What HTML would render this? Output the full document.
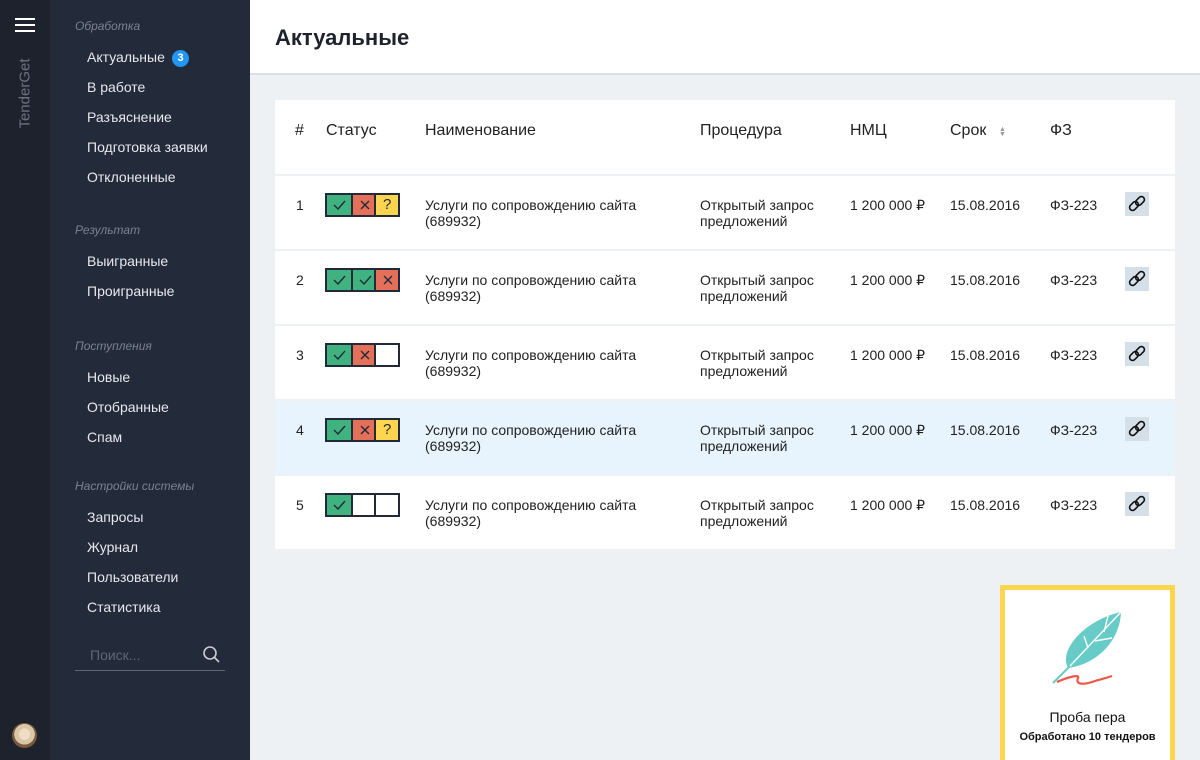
<!DOCTYPE html>
<html><head><meta charset="utf-8"><style>
*{margin:0;padding:0;box-sizing:border-box}
html,body{width:1200px;height:760px;overflow:hidden}
body{position:relative;font-family:"Liberation Sans",sans-serif;background:#edf1f4}
.a{position:absolute}
.strip{left:0;top:0;width:50px;height:760px;background:#1d222d}
.side{left:50px;top:0;width:200px;height:760px;background:#232b3b}
.grp{left:75px;font-size:12px;font-style:italic;color:#7b8190}
.it{left:87px;font-size:14px;color:#e6e8ec}
.hdr{left:250px;top:0;width:950px;height:75px;background:#fff;border-bottom:2px solid #d8dfe7}
.card{left:275px;top:100px;width:900px;height:449px;background:#fff}
.th{font-size:16px;color:#222;top:122px}
.row{left:275px;width:900px;height:75px;border-top:2px solid #edf1f4}
.c{font-size:14px;color:#222;line-height:16px}
.st{width:75px;height:24px;border:2px solid #222a3a;display:flex;background:#fff}
.st div{width:24px;height:20px;position:relative}
.st div+div{border-left:2px solid #222a3a}
.st svg{position:absolute;left:5px;top:3px}
.g{background:#3fb27f}.r{background:#e4705a}.y{background:#fdd54f}
.q{font-size:15px;text-align:center;line-height:20px;color:#222a3a}
</style></head><body>
<div class="a strip"></div>
<div class="a side"></div>
<div class="a" style="left:15px;top:18px;width:20px;height:2px;background:#fff;box-shadow:0 6px 0 #fff,0 12px 0 #fff"></div>
<div class="a" style="left:-15px;top:85px;transform:rotate(-90deg);font-size:15px;color:#6c7280;width:80px;text-align:center">TenderGet</div>
<div class="a" style="left:12px;top:723px;width:25px;height:25px;border-radius:50%;background:radial-gradient(circle at 50% 45%,#f2dcc5 0 30%,#d9c7a8 31% 55%,#7a5a3e 56%)"></div>

<div class="a grp" style="top:19px">Обработка</div>
<div class="a it" style="top:49px">Актуальные</div>
<div class="a" style="left:172px;top:50px;width:17px;height:17px;border-radius:50%;background:#2196f3;color:#fff;font-size:11px;font-weight:bold;text-align:center;line-height:17px">3</div>
<div class="a it" style="top:79px">В работе</div>
<div class="a it" style="top:109px">Разъяснение</div>
<div class="a it" style="top:139px">Подготовка заявки</div>
<div class="a it" style="top:169px">Отклоненные</div>
<div class="a grp" style="top:223px">Результат</div>
<div class="a it" style="top:253px">Выигранные</div>
<div class="a it" style="top:283px">Проигранные</div>
<div class="a grp" style="top:339px">Поступления</div>
<div class="a it" style="top:369px">Новые</div>
<div class="a it" style="top:399px">Отобранные</div>
<div class="a it" style="top:429px">Спам</div>
<div class="a grp" style="top:479px">Настройки системы</div>
<div class="a it" style="top:509px">Запросы</div>
<div class="a it" style="top:539px">Журнал</div>
<div class="a it" style="top:569px">Пользователи</div>
<div class="a it" style="top:599px">Статистика</div>
<div class="a" style="left:90px;top:647px;font-size:14px;color:#5f6675">Поиск...</div>
<svg class="a" style="left:202px;top:645px" width="18" height="18"><circle cx="8" cy="8" r="6" fill="none" stroke="#c8ccd3" stroke-width="1.6"/><line x1="12.5" y1="12.5" x2="17" y2="17" stroke="#c8ccd3" stroke-width="1.6"/></svg>
<div class="a" style="left:75px;top:670px;width:150px;height:1px;background:#5f6675"></div>

<div class="a hdr"></div>
<div class="a" style="left:275px;top:25px;font-size:22px;font-weight:bold;color:#1d222d">Актуальные</div>
<div class="a card"></div>
<div class="a th" style="left:295px">#</div>
<div class="a th" style="left:326px">Статус</div>
<div class="a th" style="left:425px">Наименование</div>
<div class="a th" style="left:700px">Процедура</div>
<div class="a th" style="left:850px">НМЦ</div>
<div class="a th" style="left:950px">Срок</div>
<div class="a" style="left:999px;top:127px;font-size:7px;color:#999;line-height:5px">▲<br>▼</div>
<div class="a th" style="left:1050px">ФЗ</div>

<div class="a row" style="top:174px"></div>
<div class="a row" style="top:249px"></div>
<div class="a row" style="top:324px"></div>
<div class="a row" style="top:399px;background:#e8f4fd;height:76px"></div>
<div class="a row" style="top:474px"></div>

<svg width="0" height="0" style="position:absolute"><defs>
<path id="ck" d="M2 7 L6 11 L13 3" fill="none" stroke="#222a3a" stroke-width="1.4"/>
<path id="xx" d="M3 3 L11 11 M11 3 L3 11" fill="none" stroke="#222a3a" stroke-width="1.4"/>
<g id="lk"><rect width="24" height="24" fill="#d5dfe8"/><g fill="none" stroke="#111" stroke-width="1.6"><rect x="4" y="11" width="10" height="6" rx="3" transform="rotate(-45 9 14)"/><rect x="10" y="6" width="10" height="6" rx="3" transform="rotate(-45 15 9)"/></g></g>
</defs></svg>

<div class="a c" style="left:296px;top:197px">1</div>
<div class="a st" style="left:325px;top:193px"><div class="g"><svg width="15" height="14"><use href="#ck"/></svg></div><div class="r"><svg width="15" height="14"><use href="#xx"/></svg></div><div class="y q">?</div></div>
<div class="a c" style="left:296px;top:272px">2</div>
<div class="a st" style="left:325px;top:268px"><div class="g"><svg width="15" height="14"><use href="#ck"/></svg></div><div class="g"><svg width="15" height="14"><use href="#ck"/></svg></div><div class="r"><svg width="15" height="14"><use href="#xx"/></svg></div></div>
<div class="a c" style="left:296px;top:347px">3</div>
<div class="a st" style="left:325px;top:343px"><div class="g"><svg width="15" height="14"><use href="#ck"/></svg></div><div class="r"><svg width="15" height="14"><use href="#xx"/></svg></div><div></div></div>
<div class="a c" style="left:296px;top:422px">4</div>
<div class="a st" style="left:325px;top:418px"><div class="g"><svg width="15" height="14"><use href="#ck"/></svg></div><div class="r"><svg width="15" height="14"><use href="#xx"/></svg></div><div class="y q">?</div></div>
<div class="a c" style="left:296px;top:497px">5</div>
<div class="a st" style="left:325px;top:493px"><div class="g"><svg width="15" height="14"><use href="#ck"/></svg></div><div></div><div></div></div>

<div class="a c" style="left:425px;top:197px">Услуги по сопровождению сайта<br>(689932)</div>
<div class="a c" style="left:425px;top:272px">Услуги по сопровождению сайта<br>(689932)</div>
<div class="a c" style="left:425px;top:347px">Услуги по сопровождению сайта<br>(689932)</div>
<div class="a c" style="left:425px;top:422px">Услуги по сопровождению сайта<br>(689932)</div>
<div class="a c" style="left:425px;top:497px">Услуги по сопровождению сайта<br>(689932)</div>
<div class="a c" style="left:700px;top:197px">Открытый запрос<br>предложений</div>
<div class="a c" style="left:700px;top:272px">Открытый запрос<br>предложений</div>
<div class="a c" style="left:700px;top:347px">Открытый запрос<br>предложений</div>
<div class="a c" style="left:700px;top:422px">Открытый запрос<br>предложений</div>
<div class="a c" style="left:700px;top:497px">Открытый запрос<br>предложений</div>
<div class="a c" style="left:850px;top:197px">1 200 000 ₽</div>
<div class="a c" style="left:850px;top:272px">1 200 000 ₽</div>
<div class="a c" style="left:850px;top:347px">1 200 000 ₽</div>
<div class="a c" style="left:850px;top:422px">1 200 000 ₽</div>
<div class="a c" style="left:850px;top:497px">1 200 000 ₽</div>
<div class="a c" style="left:950px;top:197px">15.08.2016</div>
<div class="a c" style="left:950px;top:272px">15.08.2016</div>
<div class="a c" style="left:950px;top:347px">15.08.2016</div>
<div class="a c" style="left:950px;top:422px">15.08.2016</div>
<div class="a c" style="left:950px;top:497px">15.08.2016</div>
<div class="a c" style="left:1050px;top:197px">ФЗ-223</div>
<div class="a c" style="left:1050px;top:272px">ФЗ-223</div>
<div class="a c" style="left:1050px;top:347px">ФЗ-223</div>
<div class="a c" style="left:1050px;top:422px">ФЗ-223</div>
<div class="a c" style="left:1050px;top:497px">ФЗ-223</div>

<svg class="a" style="left:1125px;top:192px" width="24" height="24"><use href="#lk"/></svg>
<svg class="a" style="left:1125px;top:267px" width="24" height="24"><use href="#lk"/></svg>
<svg class="a" style="left:1125px;top:342px" width="24" height="24"><use href="#lk"/></svg>
<svg class="a" style="left:1125px;top:417px" width="24" height="24"><use href="#lk"/></svg>
<svg class="a" style="left:1125px;top:492px" width="24" height="24"><use href="#lk"/></svg>

<div class="a" style="left:1000px;top:585px;width:175px;height:180px;background:#fff;border:5px solid #fdd54f"></div>
<svg class="a" style="left:1040px;top:600px" width="100" height="90">
<path d="M28 68 C18 50 45 20 81 12 C80 40 58 64 28 68 Z" fill="#67cbc8"/>
<path d="M13 83 L30 66" stroke="#67cbc8" stroke-width="2"/>
<path d="M30 66 L81 12 M48 48 L44 36 M55 41 L72 38 M64 32 L68 16" stroke="#fff" stroke-width="1.4" fill="none"/>
<path d="M17 82 C28 77 40 74 38 78 C35 85 44 85 55 81 C62 79 66 78 72 76" stroke="#f0564a" stroke-width="2.2" fill="none"/>
</svg>
<div class="a" style="left:1005px;top:709px;width:165px;text-align:center;font-size:14px;color:#111">Проба пера</div>
<div class="a" style="left:1005px;top:731px;width:165px;text-align:center;font-size:11px;color:#111;font-weight:bold">Обработано 10 тендеров</div>
</body></html>
